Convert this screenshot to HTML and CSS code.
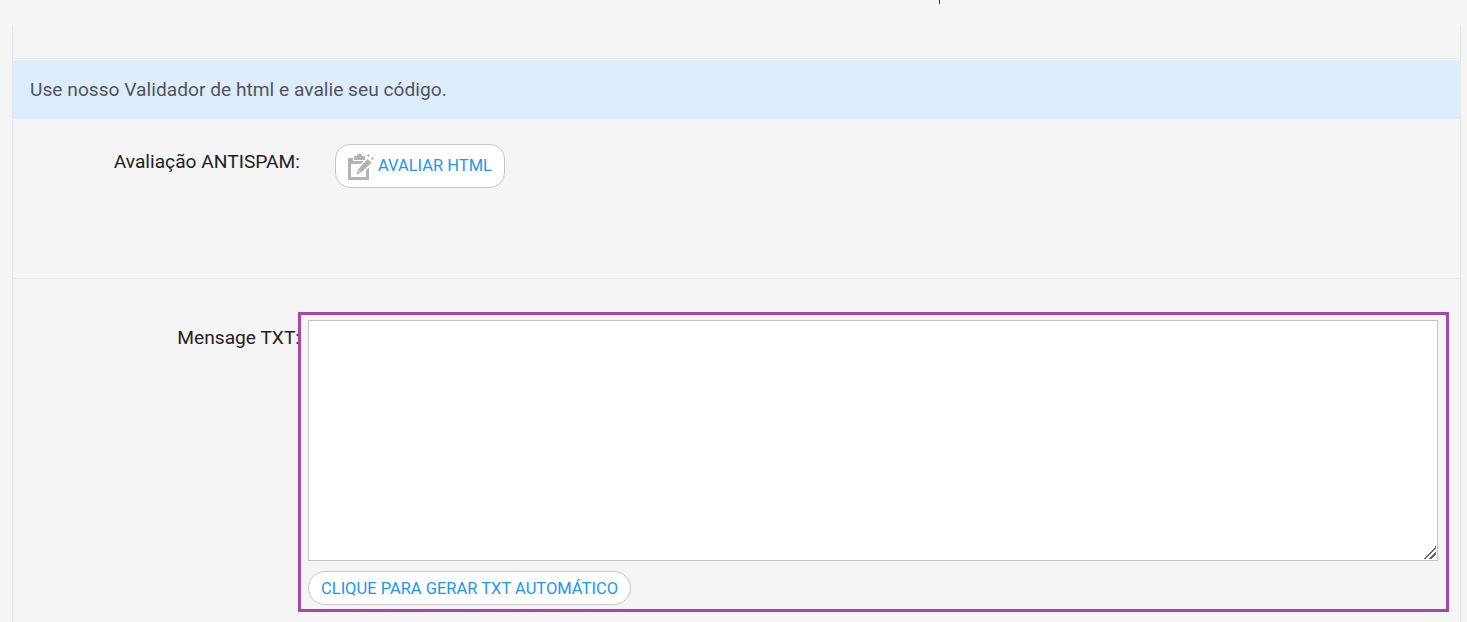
FILE: index.html
```html
<!DOCTYPE html>
<html lang="pt-BR">
<head>
<meta charset="UTF-8">
<title>Mensagem</title>
<link rel="stylesheet" href="styles.css">
</head>
<body>
<div class="tick"></div>
<div class="panel">
  <div class="top-space"></div>
  <div class="alert">Use nosso Validador de html e avalie seu código.</div>
  <div class="row row-spam">
    <label class="row-label">Avaliação ANTISPAM:</label>
    <a class="btn btn-icon" href="#">
      <svg class="btn-svg" width="27" height="28" viewBox="0 0 27 28">
        <path d="M1 6h5v3h11l-3 3H4v13h15v-7l3-3v13H1z" fill="#b3b3b3"/>
        <path d="M7 4h3a2.500 2.500 0 0 1 5 0h3v4H7z" fill="#b3b3b3"/>
        <path d="M20 3.500l1.500-1.500L23 3.500 21.500 5z M24 6.500l1.500-1.500L27 6.500 25.500 8z" fill="#b3b3b3"/>
        <path d="M20.500 6l5 4.500L15 21l-6.500 2.500L10.500 17z" fill="#b3b3b3" stroke="#fff" stroke-width="1.200"/>
        <path d="M11.500 18.500l2.500 2.500" stroke="#fff" stroke-width="1"/>
      </svg>
      <span class="btn-text">AVALIAR HTML</span>
    </a>
  </div>
  <div class="row row-txt">
    <label class="row-label row-label-txt">Mensage TXT:</label>
    <div class="highlight">
      <textarea class="txt-area"></textarea>
      <a class="btn btn-auto" href="#">CLIQUE PARA GERAR TXT AUTOMÁTICO</a>
    </div>
  </div>
</div>
</body>
</html>
```

FILE: styles.css
```css
html, body {
  height: 622px;
  overflow: hidden;
}
body {
  margin: 0;
  background: #f5f5f5;
  font-family: Roboto, Arial, sans-serif;
  font-size: 19.2px;
  color: #222;
}
.tick {
  width: 1px;
  height: 4px;
  margin-left: 939px;
  background: #333;
}
.panel {
  width: 1447px;
  height: 618px;
  margin: 22px 0 0 12px;
  border-left: 1px solid #e8e8e8;
  border-right: 1px solid #e8e8e8;
}
.top-space {
  height: 32px;
  border-bottom: 1px solid #e8e8e8;
}
.alert {
  height: 59px;
  line-height: 59px;
  padding-left: 17px;
  border-top: 1px solid #fbfbfb;
  background: #ddecff;
  color: #555;
}
.row {
  display: flex;
}
.row-spam {
  height: 160px;
  border-bottom: 1px solid #e8e8e8;
  padding-top: 25px;
  box-sizing: border-box;
}
.row-label {
  width: 287px;
  text-align: right;
  flex: none;
}
.row-spam .row-label {
  padding-top: 6px;
}
.btn {
  display: inline-flex;
  align-items: center;
  box-sizing: border-box;
  background: #fff;
  border: 1px solid #c8c8c8;
  color: #2196f3;
  font-size: 16.5px;
  text-decoration: none;
}
.btn-icon {
  width: 170px;
  height: 44px;
  margin-left: 35px;
  padding-left: 11px;
  border-radius: 15px;
}
.btn-svg {
  margin-right: 4px;
}
.btn-text {
  padding-bottom: 2px;
}
.row-txt {
  padding-top: 33px;
}
.row-label-txt {
  padding-top: 14px;
}
.highlight {
  width: 1151px;
  height: 300px;
  box-sizing: border-box;
  margin-left: -2px;
  border: 3px solid #a647a9;
  padding: 5px 7px 0;
}
.txt-area {
  display: block;
  width: 1130px;
  height: 241px;
  box-sizing: border-box;
  margin: 0;
  padding: 4px;
  background: #fff;
  border: 1px solid #c4c4c4;
  outline: none;
}
.txt-area::-webkit-resizer {
  background: linear-gradient(135deg, transparent 50%, #666 50% 58%, transparent 58% 73%, #666 73% 81%, transparent 81%) 1px 1px / 13px 13px no-repeat;
}
.btn-auto {
  height: 34px;
  margin-top: 10px;
  padding: 0 12px;
  border-radius: 17px;
}
```
